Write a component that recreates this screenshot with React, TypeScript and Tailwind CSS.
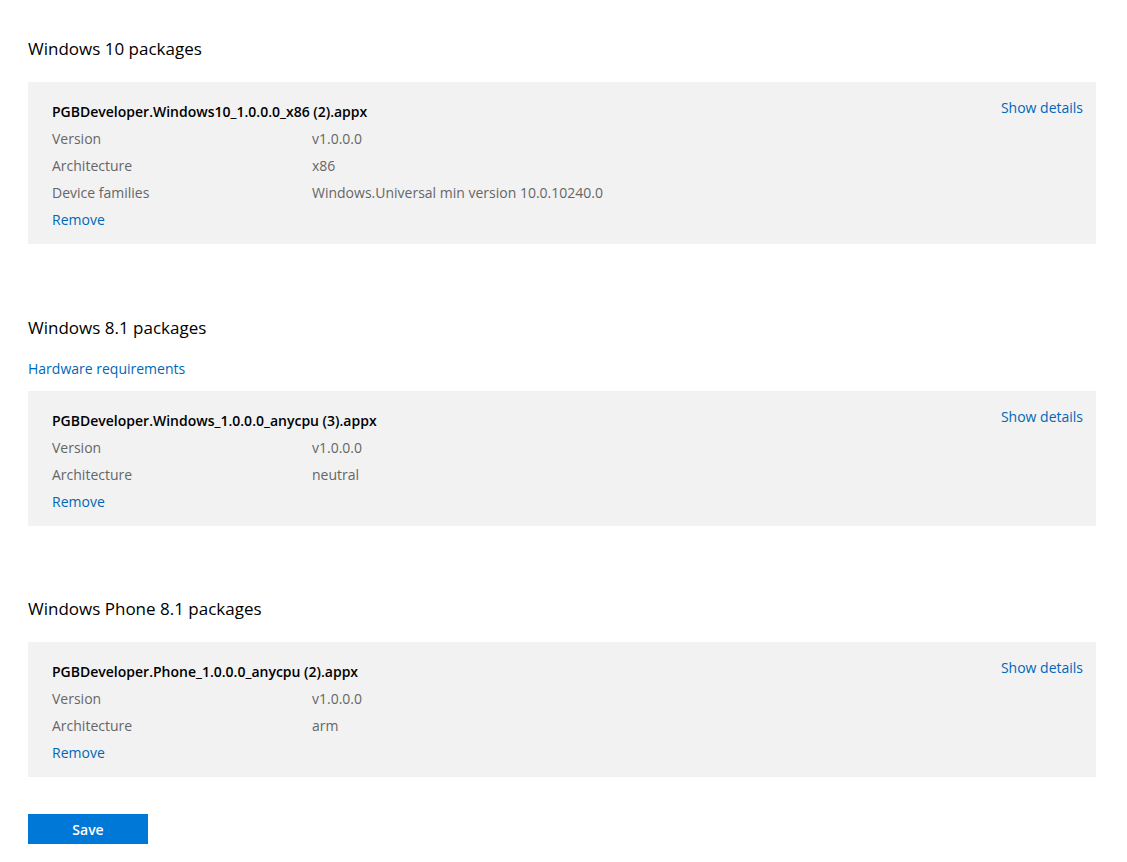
import React from "react"

type Pkg = {
  name: string
  rows: [string, string][]
}

type Section = {
  title: string
  hardware?: boolean
  pkg: Pkg
}

const sections: Section[] = [
  {
    title: "Windows 10 packages",
    pkg: {
      name: "PGBDeveloper.Windows10_1.0.0.0_x86 (2).appx",
      rows: [
        ["Version", "v1.0.0.0"],
        ["Architecture", "x86"],
        ["Device families", "Windows.Universal min version 10.0.10240.0"],
      ],
    },
  },
  {
    title: "Windows 8.1 packages",
    hardware: true,
    pkg: {
      name: "PGBDeveloper.Windows_1.0.0.0_anycpu (3).appx",
      rows: [
        ["Version", "v1.0.0.0"],
        ["Architecture", "neutral"],
      ],
    },
  },
  {
    title: "Windows Phone 8.1 packages",
    pkg: {
      name: "PGBDeveloper.Phone_1.0.0.0_anycpu (2).appx",
      rows: [
        ["Version", "v1.0.0.0"],
        ["Architecture", "arm"],
      ],
    },
  },
]

function PackageCard({ pkg }: { pkg: Pkg }) {
  return (
    <div className="flex bg-[#f2f2f2] pl-6 pr-[13px] pt-[16px] pb-[11px] text-[14px]">
      <div className="flex-1">
        <div className="leading-[27px] text-black font-semibold">{pkg.name}</div>
        {pkg.rows.map(([label, value]) => (
          <div key={label} className="flex leading-[27px] text-[#666]">
            <span className="w-[260px]">{label}</span>
            <span>{value}</span>
          </div>
        ))}
        <a className="block leading-[27px] text-[#0067b8] cursor-pointer">Remove</a>
      </div>
      <a className="-mt-px leading-[22px] text-[#0067b8] cursor-pointer">Show details</a>
    </div>
  )
}

export default function App() {
  return (
    <div
      className="bg-white min-h-[862px] pl-[28px] pt-[35px] pr-[31px]"
      style={{ fontFamily: '"Open Sans", "Noto Sans", sans-serif' }}
    >
      {sections.map((s, i) => (
        <div key={s.title} className={i === 0 ? "" : i === 1 ? "mt-[70px]" : "mt-[69px]"}>
          <h2 className="text-[17px] leading-[28px] text-black">{s.title}</h2>
          {s.hardware ? (
            <>
              <a className="block mt-[17px] text-[14px] leading-[20px] text-[#0067b8] cursor-pointer">
                Hardware requirements
              </a>
              <div className="mt-[12px]">
                <PackageCard pkg={s.pkg} />
              </div>
            </>
          ) : (
            <div className="mt-[19px]">
              <PackageCard pkg={s.pkg} />
            </div>
          )}
        </div>
      ))}
      <button className="mt-[37px] w-[120px] h-[30px] bg-[#0078d7] text-white text-[14px] font-semibold">
        Save
      </button>
    </div>
  )
}
